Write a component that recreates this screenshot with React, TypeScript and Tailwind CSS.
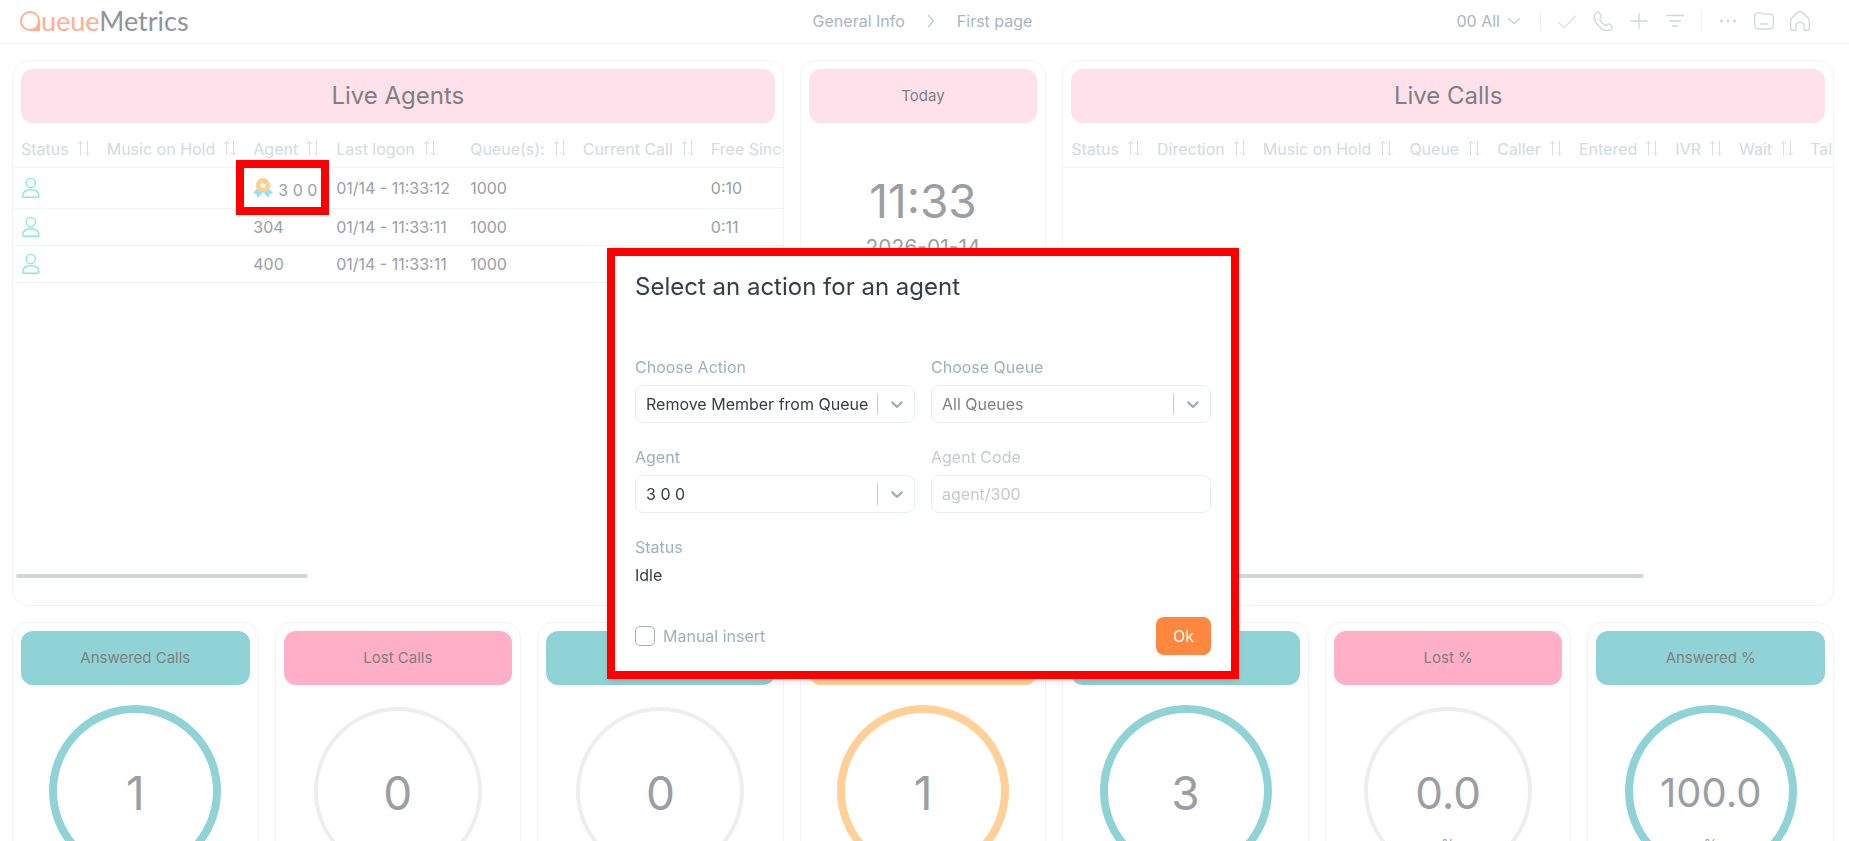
import type { ReactNode } from "react";
import { clsx } from "clsx";

const agentColumns = [
  { label: "Status" },
  { label: "Music on Hold" },
  { label: "Agent" },
  { label: "Last logon", width: "min-w-[134px]" },
  { label: "Queue(s):" },
  { label: "Current Call" },
  { label: "Free Since" },
];

const callColumns = [
  { label: "Status" },
  { label: "Direction" },
  { label: "Music on Hold" },
  { label: "Queue" },
  { label: "Caller" },
  { label: "Entered" },
  { label: "IVR" },
  { label: "Wait" },
  { label: "Talk" },
];

const agents = [
  { name: "3 0 0", logon: "01/14 - 11:33:12", queue: "1000", free: "0:10", top: true },
  { name: "304", logon: "01/14 - 11:33:11", queue: "1000", free: "0:11", top: false },
  { name: "400", logon: "01/14 - 11:33:11", queue: "1000", free: "0:11", top: false },
];

type Tone = "rose" | "pink" | "teal" | "orange";

type Gauge = {
  id: number;
  title?: string;
  value: string;
  unit?: string;
  tone: Tone;
  full: boolean;
};

const gauges: Gauge[] = [
  { id: 1, title: "Answered Calls", value: "1", tone: "teal", full: true },
  { id: 2, title: "Lost Calls", value: "0", tone: "pink", full: false },
  { id: 3, value: "0", tone: "teal", full: false },
  { id: 4, value: "1", tone: "orange", full: true },
  { id: 5, value: "3", tone: "teal", full: true },
  { id: 6, title: "Lost %", value: "0.0", unit: "%", tone: "pink", full: false },
  { id: 7, title: "Answered %", value: "100.0", unit: "%", tone: "teal", full: true },
];

const toneBg: Record<Tone, string> = {
  rose: "bg-[#ffe1ec]",
  pink: "bg-[#ffafc8]",
  teal: "bg-[#8fd3d6]",
  orange: "bg-[#ffd097]",
};

const toneStroke: Record<Tone, string> = {
  rose: "stroke-[#ffe1ec]",
  pink: "stroke-[#ffafc8]",
  teal: "stroke-[#8fd3d6]",
  orange: "stroke-[#ffd097]",
};

function Icon({ children, className = "size-5" }: { children: ReactNode; className?: string }) {
  return (
    <svg
      viewBox="0 0 20 20"
      fill="none"
      stroke="currentColor"
      strokeWidth="1.3"
      strokeLinecap="round"
      strokeLinejoin="round"
      className={className}
      aria-hidden="true"
    >
      {children}
    </svg>
  );
}

function SortIcon() {
  return (
    <svg
      viewBox="0 0 14 16"
      fill="none"
      stroke="#d6dadd"
      strokeWidth="0.9"
      strokeLinecap="round"
      strokeLinejoin="round"
      className="mb-0.5 h-4 w-3.5 shrink-0"
      aria-hidden="true"
    >
      <path d="M3.500 15V1.500M1 4l2.500-2.500L6 4M10.500 1v14M8 12.500l2.500 2.500L13 12.500" />
    </svg>
  );
}

function UserIcon() {
  return (
    <svg
      viewBox="0 0 20 22"
      fill="none"
      stroke="#8cecc6"
      strokeWidth="1.4"
      strokeLinejoin="round"
      className="h-[22px] w-5"
      aria-hidden="true"
    >
      <circle cx="9.8" cy="6" r="4.600" />
      <path d="M1.700 19.200c0-4.600 3-6.400 8.100-6.400s8.100 1.800 8.100 6.400c0 .8-.4 1.100-1.100 1.100h-14c-.7 0-1.100-.3-1.100-1.100Z" />
    </svg>
  );
}

function MedalIcon() {
  return (
    <svg viewBox="0 0 20 20" className="size-5 shrink-0" aria-hidden="true">
      <path
        fill="#8fe3ff"
        d="M4 10.500 0 15.300l3.200.7 1.600 3.800 4.700-5.400h1l4.700 5.400 1.600-3.800 3.200-.7-4-4.800Z"
      />
      <circle cx="10" cy="7.200" r="7.100" fill="#ffd08f" />
      <path
        fill="#fff"
        d="m10 3.900 1 2.100 2.300.3-1.700 1.600.4 2.300-2-1.100-2 1.100.4-2.300-1.700-1.600L9 6Z"
      />
    </svg>
  );
}

function Logo() {
  return (
    <a href="#" aria-label="QueueMetrics" className="flex items-center gap-px font-[Lato,sans-serif] text-[27px] leading-8">
      <span className="flex size-5 items-center justify-center rounded-full rounded-br-none bg-[#ffb08f]">
        <span className="size-4 rounded-full bg-white" />
      </span>
      <span className="text-[#ffb08f]">
        ueue<span className="text-[#929499]">Metrics</span>
      </span>
    </a>
  );
}

function Header() {
  return (
    <header className="grid h-11 grid-cols-[1fr_auto_1fr] items-center border-b border-[#f1f3f4] pr-6 pl-5 pb-1.5 pt-1">
      <Logo />
      <nav aria-label="Breadcrumb" className="flex items-center gap-4 text-[#a9b6c0]">
        <a href="#">General Info</a>
        <Icon className="size-5 text-[#c0cad2]">
          <path d="m7.500 4.500 5 5.500-5 5.500" />
        </Icon>
        <a href="#">First page</a>
      </nav>
      <div className="flex items-center justify-end gap-4 pr-[15px] text-[#cfd6dc]">
        <button type="button" className="flex items-center gap-1 text-[#a9b6c0]">
          00 All
          <Icon className="size-5 text-[#c0cad2]">
            <path d="m4.500 7.800 5.500 4.700 5.500-4.700" />
          </Icon>
        </button>
        <span className="h-5 w-px bg-[#eceff1]" />
        <button type="button" aria-label="Confirm" className="text-[#dde2e6]">
          <Icon>
            <path d="m1.500 11.500 6 5L18.500 5" />
          </Icon>
        </button>
        <button type="button" aria-label="Phone">
          <Icon>
            <path d="M1.500 4.500c-.8 3.200 1 7.200 4.500 10.700s7.500 5 10.300 4.100c1.600-.6 2.900-2.200 2.900-3.100 0-1-2.600-3.200-3.700-3.200-1 0-1.600 1.500-2.700 1.500-1.300 0-6-4.500-6-6 0-1.200 1.400-1.700 1.400-2.700C8.200 4.500 6.200.9 4.900.9c-1.400 0-3 2-3.400 3.600Z" />
          </Icon>
        </button>
        <button type="button" aria-label="Add">
          <Icon>
            <path d="M10 2.500v15M2 10h16" />
          </Icon>
        </button>
        <button type="button" aria-label="Filter">
          <Icon>
            <path d="M1.500 4.500h17M4.500 10h11M7.500 15h5" />
          </Icon>
        </button>
        <span className="h-5 w-px bg-[#eceff1]" />
        <button type="button" aria-label="More">
          <Icon>
            <g fill="currentColor" strokeWidth="0">
              <circle cx="3.500" cy="10" r="1.400" />
              <circle cx="10" cy="10" r="1.400" />
              <circle cx="16.500" cy="10" r="1.400" />
            </g>
          </Icon>
        </button>
        <button type="button" aria-label="Folder">
          <Icon>
            <path d="M.7 5.500c0-2.400 1.300-3.700 3.700-3.700h2.300c1.200 0 1.500 1.300 2.800 1.300h6.100c2.400 0 3.700 1.300 3.700 3.700v7.500c0 2.400-1.300 3.700-3.700 3.700H4.400C2 18 .7 16.700.7 14.300ZM7 13h6.500" />
          </Icon>
        </button>
        <button type="button" aria-label="Home">
          <Icon>
            <path d="M.7 9.500c0-1.400.4-2 1.500-3L7.500 1.700c1.700-1.400 3.300-1.400 5 0l5.300 4.800c1.100 1 1.500 1.600 1.500 3v8c0 1.200-.6 1.900-1.800 1.900h-1.700c-1.200 0-1.800-.7-1.800-1.900v-2.700c0-2-1.500-3.500-4-3.500s-4 1.500-4 3.500v2.700c0 1.200-.6 1.900-1.800 1.900H2.500c-1.200 0-1.800-.7-1.800-1.900Z" />
          </Icon>
        </button>
      </div>
    </header>
  );
}

function Card({
  title,
  tone,
  large,
  className,
  children,
}: {
  title?: string;
  tone: Tone;
  large?: boolean;
  className?: string;
  children: ReactNode;
}) {
  return (
    <section
      className={clsx(
        "flex min-w-0 flex-col overflow-hidden rounded-2xl border border-[#f1f3f4]",
        className,
      )}
    >
      <h2
        className={clsx(
          "mx-2 mt-2 flex h-[54px] shrink-0 items-center justify-center rounded-xl text-[#808080]",
          large ? "text-2xl" : "text-[15px]",
          toneBg[tone],
        )}
      >
        {title}
      </h2>
      {children}
    </section>
  );
}

function TableHead({ columns }: { columns: { label: string; width?: string }[] }) {
  return (
    <thead>
      <tr className="h-11 border-b border-[#eff3f4] text-[#d3dae0]">
        {columns.map(({ label, width }) => (
          <th key={label} scope="col" className={clsx("px-2 pt-2 text-left font-normal", width)}>
            <span className="flex items-center gap-2">
              {label}
              <SortIcon />
            </span>
          </th>
        ))}
        <th className="w-full" />
      </tr>
    </thead>
  );
}

function LiveAgents() {
  return (
    <Card title="Live Agents" tone="rose" large className="col-span-3">
      <table className="w-full border-collapse whitespace-nowrap text-[#9b9ea3]">
        <TableHead columns={agentColumns} />
        <tbody>
          {agents.map((agent) => (
            <tr
              key={agent.name}
              className={clsx("border-b border-[#eff3f4]", agent.top ? "h-[41px]" : "h-[37px]")}
            >
              <td className="px-2">
                <UserIcon />
              </td>
              <td className="px-2" />
              <td className="px-2">
                {agent.top ? (
                  <span className="relative flex w-fit items-center gap-[5px]">
                    <MedalIcon />
                    <span className="pt-1">{agent.name}</span>
                    <span className="absolute -top-3.5 -right-3 -bottom-[13px] -left-[17px] border-8 border-[#ff0000]" />
                  </span>
                ) : (
                  agent.name
                )}
              </td>
              <td className="px-2">{agent.logon}</td>
              <td className="px-2">{agent.queue}</td>
              <td className="px-2" />
              <td className="px-2">{agent.free}</td>
              <td />
            </tr>
          ))}
        </tbody>
      </table>
      <div className="mx-[3px] mt-auto mb-[27px] h-1 w-[38%] shrink-0 rounded-full bg-[#d0d7dc]" />
    </Card>
  );
}

function LiveCalls() {
  return (
    <Card title="Live Calls" tone="rose" large className="col-span-3">
      <table className="w-full border-collapse whitespace-nowrap">
        <TableHead columns={callColumns} />
      </table>
      <div className="mx-[3px] mt-auto mb-[27px] h-1 w-3/4 shrink-0 rounded-full bg-[#d0d7dc]" />
    </Card>
  );
}

function GaugeCard({ gauge }: { gauge: Gauge }) {
  return (
    <Card title={gauge.title} tone={gauge.tone}>
      <div className="mt-[18px] grid place-items-center *:col-start-1 *:row-start-1">
        <svg viewBox="0 0 176 176" fill="none" className="size-44" aria-hidden="true">
          <circle
            cx="88"
            cy="88"
            r="82"
            strokeWidth={gauge.full ? 8 : 4}
            className={gauge.full ? toneStroke[gauge.tone] : "stroke-[#eeeeee]"}
          />
        </svg>
        <p
          className={clsx(
            "pt-1 text-[#9b9ea3]",
            gauge.value.length > 3 ? "text-[40px]" : gauge.value.length > 1 ? "text-[44px]" : "text-[46px]",
          )}
        >
          {gauge.value}
        </p>
        {gauge.unit && <p className="pt-27 text-sm text-[#9b9ea3]">{gauge.unit}</p>}
      </div>
    </Card>
  );
}

function SelectField({ id, label, value, muted }: { id: string; label: string; value: string; muted?: boolean }) {
  return (
    <div className="flex flex-col gap-1.5">
      <label htmlFor={id} className="text-[#9fb0bd]">
        {label}
      </label>
      <div className="relative">
        <select
          id={id}
          defaultValue={value}
          className={clsx(
            "h-[38px] w-full appearance-none rounded-lg border border-[#e6eeee] bg-white pr-9 pl-2.5",
            muted ? "text-[#808080]" : "text-[#363d47]",
          )}
        >
          <option>{value}</option>
        </select>
        <span className="pointer-events-none absolute inset-y-2 right-0 flex w-[38px] items-center justify-center border-l border-[#cccccc] text-[#9fb0bd]">
          <svg viewBox="0 0 20 20" fill="currentColor" className="size-5" aria-hidden="true">
            <path d="M4.516 7.548c.436-.446 1.043-.481 1.576 0L10 11.295l3.908-3.747c.533-.481 1.141-.446 1.574 0 .436.445.408 1.197 0 1.615-.406.418-4.695 4.502-4.695 4.502a1.095 1.095 0 0 1-1.576 0S4.924 9.581 4.516 9.163s-.436-1.170 0-1.615Z" />
          </svg>
        </span>
      </div>
    </div>
  );
}

function ActionDialog() {
  return (
    <div className="fixed inset-0 flex items-start justify-center pt-[248px] pr-[3px]">
      <div
        role="dialog"
        aria-labelledby="dialog-title"
        className="flex w-[632px] flex-col border-8 border-[#ff0000] bg-white px-5 pt-[13px] pb-4 shadow-md"
      >
        <h1 id="dialog-title" className="text-2xl leading-9 text-[#363d47]">
          Select an action for an agent
        </h1>
        <form className="mt-[50px] grid grid-cols-2 gap-x-4 gap-y-[22px]">
          <SelectField id="action" label="Choose Action" value="Remove Member from Queue" />
          <SelectField id="queue" label="Choose Queue" value="All Queues" muted />
          <SelectField id="agent" label="Agent" value="3 0 0" />
          <div className="flex flex-col gap-1.5">
            <label htmlFor="agent-code" className="text-[#c6cacd]">
              Agent Code
            </label>
            <input
              id="agent-code"
              type="text"
              disabled
              defaultValue="agent/300"
              className="h-[38px] rounded-lg border border-[#e6eeee] px-2.5 text-[#c6cacd]"
            />
          </div>
          <div className="flex flex-col gap-1">
            <span className="text-[#9fb0bd]">Status</span>
            <span className="text-[#363d47]">Idle</span>
          </div>
          <div className="col-span-2 mt-2 flex items-center justify-between">
            <label className="flex items-center gap-2 text-[#9fb0bd]">
              <input
                type="checkbox"
                className="size-5 appearance-none rounded-[5px] border border-[#9fb0bd] bg-white"
              />
              Manual insert
            </label>
            <button type="button" className="h-[38px] rounded-lg bg-[#ff8740] px-[17px] text-white">
              Ok
            </button>
          </div>
        </form>
      </div>
    </div>
  );
}

export default function App() {
  return (
    <div className="h-screen overflow-hidden bg-white font-[Inter,sans-serif] text-base">
      <Header />
      <main className="grid auto-rows-[546px] grid-cols-7 gap-4 pt-4 pr-[15px] pl-3">
        <LiveAgents />
        <Card title="Today" tone="rose">
          <div className="mt-12 flex flex-col items-center text-[#9b9ea3]">
            <p className="text-[46px] leading-[61px]">11:33</p>
            <p className="text-[21px] leading-8">2026-01-14</p>
          </div>
        </Card>
        <LiveCalls />
        {gauges.map((gauge) => (
          <GaugeCard key={gauge.id} gauge={gauge} />
        ))}
      </main>
      <ActionDialog />
    </div>
  );
}
